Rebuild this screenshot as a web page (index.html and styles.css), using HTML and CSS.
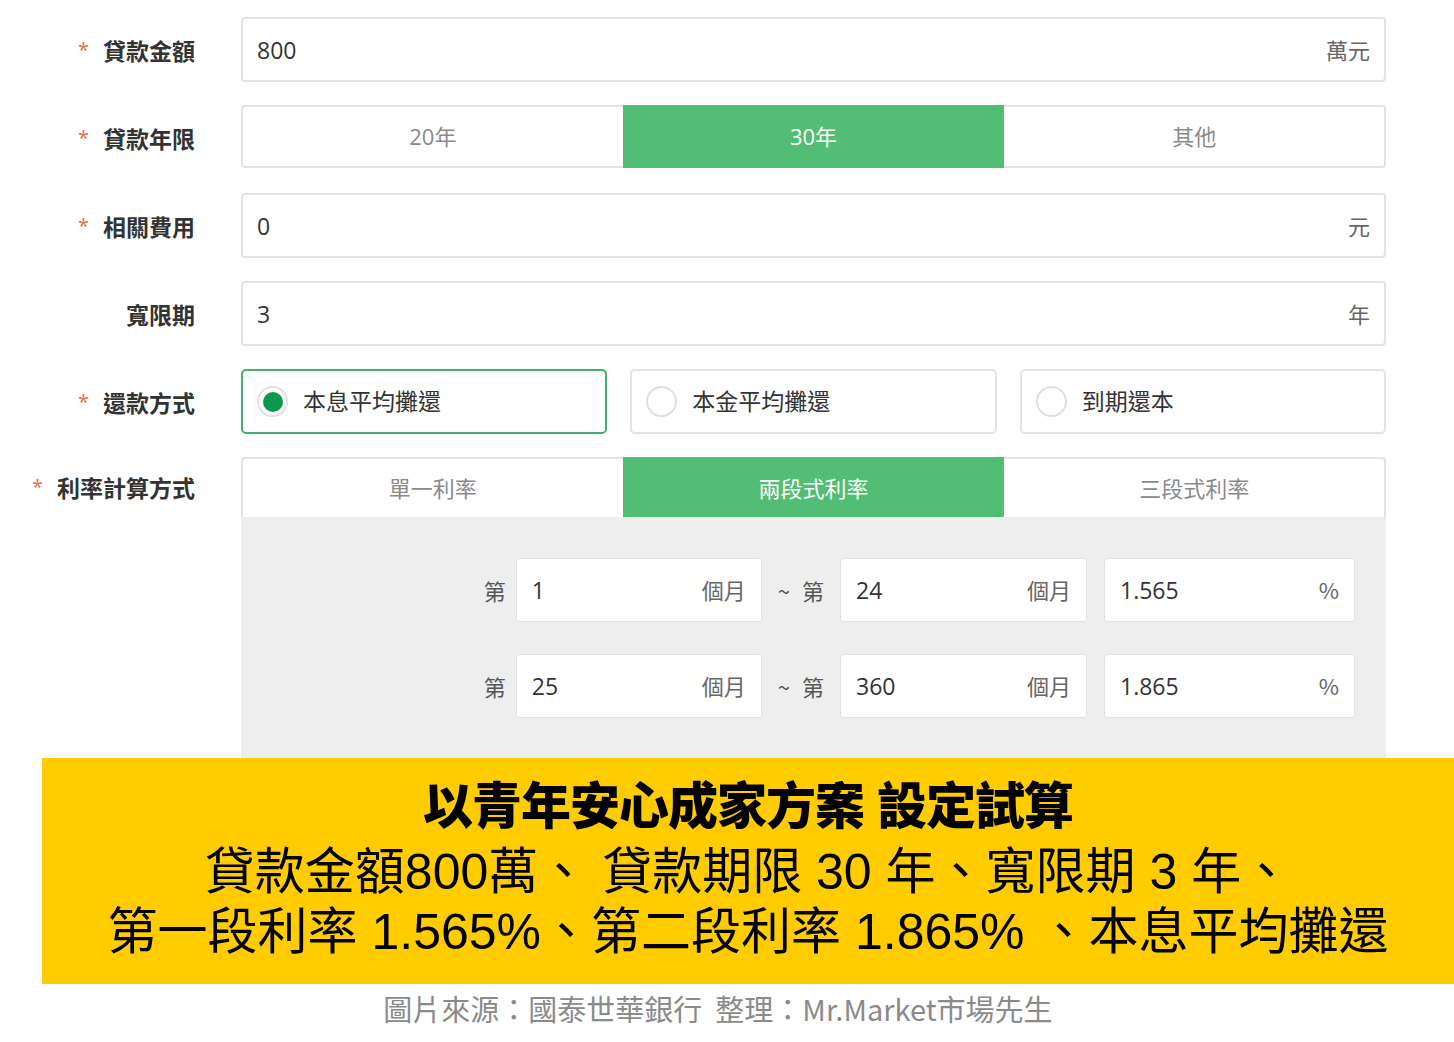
FILE: index.html
```html
<!DOCTYPE html>
<html lang="zh-Hant">
<head>
<meta charset="utf-8">
<title>房貸試算</title>
<link rel="stylesheet" href="styles.css">
</head>
<body>
<div class="form">
  <div class="row">
    <div class="label"><span class="req">*</span>貸款金額</div>
    <div class="input"><span class="val">800</span><span class="unit">萬元</span></div>
  </div>
  <div class="row">
    <div class="label"><span class="req">*</span>貸款年限</div>
    <div class="seg">
      <div class="opt first">20年</div>
      <div class="opt on">30年</div>
      <div class="opt last">其他</div>
    </div>
  </div>
  <div class="row">
    <div class="label"><span class="req">*</span>相關費用</div>
    <div class="input"><span class="val">0</span><span class="unit">元</span></div>
  </div>
  <div class="row">
    <div class="label">寬限期</div>
    <div class="input"><span class="val">3</span><span class="unit">年</span></div>
  </div>
  <div class="row">
    <div class="label"><span class="req">*</span>還款方式</div>
    <div class="radios">
      <div class="radio-box on"><span class="circle"><span class="dot"></span></span><span class="rtext">本息平均攤還</span></div>
      <div class="radio-box"><span class="circle"></span><span class="rtext">本金平均攤還</span></div>
      <div class="radio-box"><span class="circle"></span><span class="rtext">到期還本</span></div>
    </div>
  </div>
  <div class="row row-rate">
    <div class="label tab-label"><span class="req">*</span>利率計算方式</div>
    <div class="rate">
      <div class="seg tabs">
        <div class="opt first">單一利率</div>
        <div class="opt on">兩段式利率</div>
        <div class="opt last">三段式利率</div>
      </div>
      <div class="panel">
        <div class="prow">
          <span class="pl">第</span>
          <div class="pin w1"><span class="val">1</span><span class="unit">個月</span></div>
          <span class="pl mid">~ 第</span>
          <div class="pin w2"><span class="val">24</span><span class="unit">個月</span></div>
          <div class="pin w3"><span class="val">1.565</span><span class="unit">%</span></div>
        </div>
        <div class="prow second">
          <span class="pl">第</span>
          <div class="pin w1"><span class="val">25</span><span class="unit">個月</span></div>
          <span class="pl mid">~ 第</span>
          <div class="pin w2"><span class="val">360</span><span class="unit">個月</span></div>
          <div class="pin w3"><span class="val">1.865</span><span class="unit">%</span></div>
        </div>
      </div>
    </div>
  </div>
</div>
<div class="banner">
  <div class="title">以青年安心成家方案 設定試算</div>
  <div class="line first-line">貸款金額800萬、 貸款期限 30 年、寬限期 3 年、</div>
  <div class="line">第一段利率 1.565%、第二段利率 1.865% 、本息平均攤還</div>
</div>
<div class="source">圖片來源：國泰世華銀行&nbsp;&nbsp;整理：Mr.Market市場先生</div>
</body>
</html>
```
FILE: styles.css
```css
body {
  margin: 0;
  background: #fff;
  font-family: "Open Sans", "Noto Sans CJK TC", sans-serif;
  color: #333;
}

.form {
  padding-top: 17px;
}

.row {
  display: grid;
  grid-template-columns: 195px 1145px;
  column-gap: 46px;
  align-items: center;
  height: 65px;
  margin-bottom: 23px;
}

.label {
  text-align: right;
  font-family: "Noto Sans CJK TC", sans-serif;
  font-size: 23px;
  font-weight: 700;
  color: #333;
  white-space: nowrap;
}

.req {
  font-family: "Open Sans", sans-serif;
  color: #f26a43;
  font-size: 20px;
  font-weight: 400;
  margin-right: 14px;
  position: relative;
  top: -3px;
}

.input {
  box-sizing: border-box;
  height: 65px;
  border: 2px solid #e3e3e3;
  border-radius: 4px;
  display: flex;
  align-items: center;
  justify-content: space-between;
  padding: 0 14px;
  font-size: 23px;
}

.val {
  color: #333;
}

.unit {
  font-family: "Noto Sans CJK TC", sans-serif;
  color: #666;
  font-size: 22px;
  position: relative;
  top: -1px;
}

.seg {
  display: grid;
  grid-template-columns: repeat(3, 1fr);
  height: 63px;
  align-self: start;
}

.opt {
  box-sizing: border-box;
  display: flex;
  align-items: center;
  justify-content: center;
  padding-bottom: 4px;
  border-top: 2px solid #e3e3e3;
  border-bottom: 2px solid #e3e3e3;
  font-family: "Open Sans", "Noto Sans CJK TC", sans-serif;
  font-size: 22px;
  color: #8a8a8a;
  background: #fff;
}

.opt.first {
  border-left: 2px solid #e3e3e3;
  border-radius: 4px 0 0 4px;
}

.opt.last {
  border-right: 2px solid #e3e3e3;
  border-radius: 0 4px 4px 0;
}

.opt.on {
  background: #52bd74;
  border-color: #52bd74;
  color: #fff;
}

.radios {
  display: grid;
  grid-template-columns: repeat(3, 1fr);
  column-gap: 23px;
}

.radio-box {
  box-sizing: border-box;
  height: 65px;
  border: 2px solid #e3e3e3;
  border-radius: 5px;
  display: flex;
  align-items: center;
  padding-left: 14px;
}

.radio-box.on {
  border-color: #45b06d;
}

.circle {
  box-sizing: border-box;
  width: 31px;
  height: 31px;
  border: 2px solid #e0e0e0;
  border-radius: 50%;
  display: flex;
  align-items: center;
  justify-content: center;
  flex-shrink: 0;
}

.dot {
  width: 20px;
  height: 20px;
  border-radius: 50%;
  background: #0b9a4b;
}

.rtext {
  margin-left: 15px;
  font-family: "Noto Sans CJK TC", sans-serif;
  font-size: 23px;
  color: #333;
  position: relative;
  top: -2px;
}

.row-rate {
  align-items: start;
  height: auto;
  margin-bottom: 0;
}

.tab-label {
  line-height: 60px;
}

.tabs {
  height: 60px;
}

.tabs .opt {
  border-bottom: none;
  padding-bottom: 2px;
}

.tabs .opt.first {
  border-radius: 4px 0 0 0;
}

.tabs .opt.last {
  border-radius: 0 4px 0 0;
}

.panel {
  background: #eeeeee;
  padding: 41px 31px 40px 0;
}

.prow {
  display: flex;
  align-items: center;
  justify-content: flex-end;
}

.prow.second {
  margin-top: 32px;
}

.pl {
  font-family: "Noto Sans CJK TC", sans-serif;
  font-size: 22px;
  color: #555;
  margin-right: 10px;
}

.pl.mid {
  margin-left: 16px;
  margin-right: 16px;
  word-spacing: 7px;
}

.pin {
  box-sizing: border-box;
  height: 64px;
  background: #fff;
  border: 1px solid #e2e2e2;
  border-radius: 3px;
  display: flex;
  align-items: center;
  justify-content: space-between;
  padding: 0 15px;
  font-size: 23px;
}

.w1 { width: 246px; }
.w2 { width: 247px; margin-right: 17px; }
.w3 { width: 251px; }

.banner {
  margin-left: 42px;
  background: #ffcc00;
  text-align: center;
  color: #000;
  font-family: "Liberation Sans", "Noto Sans CJK TC", sans-serif;
  font-size: 50px;
  padding: 19px 0 22px;
}

.title {
  font-weight: 900;
  line-height: 60px;
  letter-spacing: -1px;
}

.line {
  line-height: 60px;
  white-space: nowrap;
}

.first-line {
  margin-top: 5px;
}

.source {
  text-align: center;
  padding-right: 18px;
  margin-top: 6px;
  font-family: "Noto Sans CJK TC", sans-serif;
  font-size: 29px;
  line-height: 36px;
  color: #8a8a8a;
  white-space: nowrap;
}
```
